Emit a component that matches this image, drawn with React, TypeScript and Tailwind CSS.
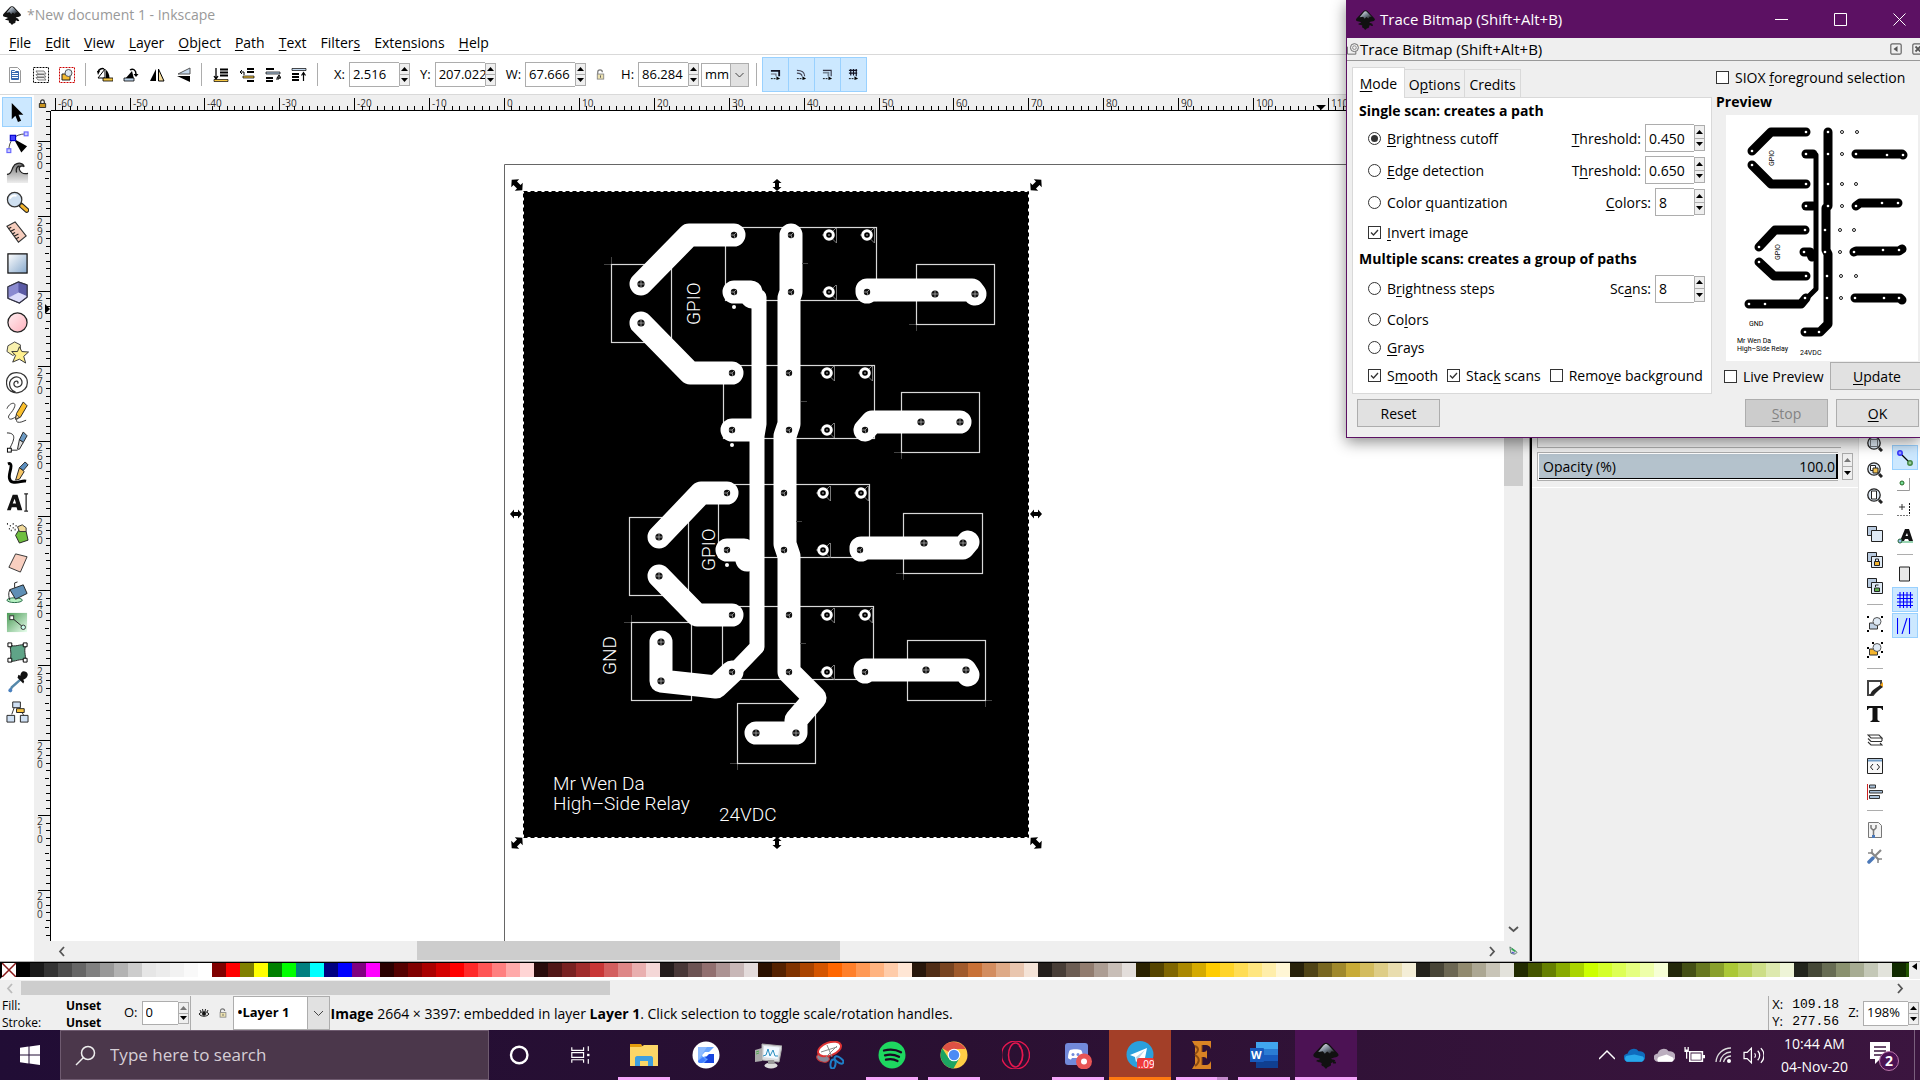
import React, { ReactNode } from "react";

/* ---------- shared helpers ---------- */

/* "_" marks the letter that carries the keyboard mnemonic */
function Mn({ t }: { t: string }) {
  const i = t.indexOf("_");
  if (i < 0) return <>{t}</>;
  return (
    <span className="whitespace-pre">
      {t.slice(0, i)}
      <span className="underline underline-offset-2">{t[i + 1]}</span>
      {t.slice(i + 2)}
    </span>
  );
}

function Svg({ s = 16, vb = 16, children }: { s?: number; vb?: number; children: ReactNode }) {
  return (
    <svg width={s} height={s} viewBox={`0 0 ${vb} ${vb}`} fill="none" className="shrink-0" aria-hidden="true">
      {children}
    </svg>
  );
}

function Arrows({ label, dim = false }: { label: string; dim?: boolean }) {
  return (
    <span className="flex w-[11px] shrink-0 flex-col self-stretch py-px">
      <button aria-label={`Increase ${label}`} className="flex flex-1 items-center justify-center border border-[#adadad] bg-[#efefef]">
        <svg width="7" height="4" viewBox="0 0 7 4"><path d="M0 4 3.500 0 7 4z" fill={dim ? "#777" : "#000"} /></svg>
      </button>
      <button aria-label={`Decrease ${label}`} className="flex flex-1 items-center justify-center border border-t-0 border-[#adadad] bg-[#efefef]">
        <svg width="7" height="4" viewBox="0 0 7 4"><path d="M0 0 3.500 4 7 0z" fill="#000" /></svg>
      </button>
    </span>
  );
}

function Spin({ id, label, value, box, text = "text-[14px]", dim }: { id: string; label: string; value: string; box: string; text?: string; dim?: boolean }) {
  return (
    <span className={"flex items-center " + text}>
      <label htmlFor={id} className="pr-1 whitespace-nowrap"><Mn t={label} /></label>
      <span className={"flex items-stretch " + box}>
        <input id={id} defaultValue={value} className="w-0 min-w-0 flex-1 border border-r-0 border-[#adadad] bg-white pl-[3px] outline-none" />
        <Arrows label={label.replace("_", "")} dim={dim} />
      </span>
    </span>
  );
}

function InkLogo({ s }: { s: number }) {
  return (
    <Svg s={s} vb={24}>
      <defs>
        <linearGradient id="ink" x1="0" y1="0" x2="1" y2="1">
          <stop offset="0" stopColor="#fff" /><stop offset="0.5" stopColor="#7b8795" /><stop offset="1" stopColor="#111" />
        </linearGradient>
      </defs>
      <path d="M12 1.500c1 0 2 .6 3 1.600l7 7.400c1.500 1.700.6 3-1.500 3.500-2 .4-4 .6-4 1.300s3.400.7 3.400 1.700-2.500 1.200-3.400 1.800.4 1.500-.6 2.400-2.400.6-3 1.800-1.600 1-2.100-.2-2-1-2.600-2 .9-1.700-.4-2.200-4-.6-4-1.500 3-.8 3-1.600-2.400-.8-4-1.400C1 13.400.6 12 2 10.500l7-7.400c1-1 2-1.600 3-1.600z" fill="#111" />
      <path d="M12 2.500c.7 0 1.500.5 2.300 1.400l5 5.300-2.500-.4-1.500 2-2.300-1.700-2 1.900-1.700-2.200-4 .6 4.500-5.500c.8-.9 1.500-1.400 2.200-1.400z" fill="url(#ink)" />
      <path d="M18 18.500h2.500" stroke="#111" strokeWidth="1.500" />
    </Svg>
  );
}

function Lock({ s = 12 }: { s?: number }) {
  return (
    <Svg s={s} vb={12}>
      <path d="M3 6V3.500a2.500 2.500 0 0 1 5 0" stroke="#777" strokeWidth="1.300" />
      <rect x="2.500" y="5.500" width="7" height="5.500" fill="#eee3b0" stroke="#888" />
      <path d="M6 7v2.500" stroke="#555" />
    </Svg>
  );
}

/* ---------- top bars ---------- */

const MENUS = ["_File", "_Edit", "_View", "_Layer", "_Object", "_Path", "_Text", "Filter_s", "Exte_nsions", "_Help"];

const BAR_ICONS: { name: string; el: ReactNode }[][] = [
  [
    { name: "Select all", el: <><path d="M2.500.5h8l3 3v12h-11z" fill="#fff" stroke="#999" /><path d="M5 5.500h6M5 7.500h6M5 9.500h6M5 11.500h6" stroke="#3667b0" /><path d="M4.500 3.500h3l1 1h3v8h-7z" stroke="#3667b0" /></> },
    { name: "Select in all layers", el: <><rect x=".5" y=".5" width="15" height="15" stroke="#000" strokeDasharray="2 1" /><path d="M3 4h8l2 3H5zM3 7.500h8l2 2.500H5zM3 10.500h8l2 2.500H5z" fill="#eee" stroke="#666" strokeWidth=".8" /></> },
    { name: "Deselect", el: <><rect x=".5" y=".5" width="15" height="15" stroke="#c00" strokeDasharray="2 1" /><path d="M3 7h8v6H3z" fill="#f4b92e" stroke="#222" /><circle cx="9.500" cy="6" r="3.500" fill="#dbe6f0" stroke="#555" /></> },
  ],
  [
    { name: "Rotate 90 left", el: <><path d="M8 2v9H1z" fill="#fff" stroke="#000" /><path d="M9 3c1.500 1 3.500 4 3.500 8H9z" fill="#000" /><path d="M6 11h10v3H6z" fill="#f4c542" stroke="#000" strokeWidth=".8" /><path d="M1 5c1-3 4-4 6-3" stroke="#000" strokeWidth="1.500" /><path d="M0 4l3 0-2 4z" fill="#000" /></> },
    { name: "Rotate 90 right", el: <><path d="M9 4l2 8H2z" fill="#000" /><path d="M1 11h10v3H1z" fill="#b9d0e6" stroke="#000" strokeWidth=".8" /><path d="M7 3c3-2 6 0 6 4" stroke="#000" strokeWidth="1.500" /><path d="M10.500 7h5L13 10z" fill="#000" /></> },
    { name: "Flip horizontal", el: <><path d="M7 2v12H1z" fill="#000" /><path d="M9.500 2v12h5.500z" fill="#f7dd9c" stroke="#000" /></> },
    { name: "Flip vertical", el: <><path d="M15 1v6H3z" fill="#c5d9ee" stroke="#555" /><path d="M15 15V9H2z" fill="#000" /></> },
  ],
  [
    { name: "Lower to bottom", el: <><path d="M3 1v10M1 9l2 3 2-3" stroke="#000" strokeWidth="1.300" /><path d="M7 2.500h8M7 5.500h8M7 8.500h8" stroke="#000" strokeWidth="2" /><path d="M1 12.500h14v2H1z" fill="#f4c542" stroke="#000" strokeWidth=".7" /></> },
    { name: "Lower", el: <><path d="M8 2h7M8 5h7M8 14h7" stroke="#000" strokeWidth="2" /><path d="M4 9h11v2H4z" fill="#f4c542" stroke="#000" strokeWidth=".7" /><path d="M1 5h4v3M1 5l2-2M1 5l2 2" stroke="#000" /></> },
    { name: "Raise", el: <><path d="M1 2h8M1 11h7M1 14h7" stroke="#000" strokeWidth="2" /><path d="M1 5h14v2H1z" fill="#b9d0e6" stroke="#000" strokeWidth=".7" /><path d="M11 12h3V9M14 8l-2 3h4z" stroke="#000" /></> },
    { name: "Raise to top", el: <><path d="M1 1.500h14v2H1z" fill="#c5d9ee" stroke="#000" strokeWidth=".7" /><path d="M1 7h7M1 10h7M1 13h7" stroke="#000" strokeWidth="2" /><path d="M12.500 14V6M10.500 8.500l2-3 2 3" stroke="#000" strokeWidth="1.200" /></> },
  ],
];

const AFFECT = ["Scale stroke width", "Scale rounded corners", "Move gradients", "Move patterns"];

function Sep() {
  return <span className="h-[23px] w-px shrink-0 bg-[#adadad]" />;
}

function TopBars() {
  return (
    <header className="shrink-0 bg-white text-black">
      <div className="flex h-[29px] items-center gap-[5px] pl-[2px] text-[14px] text-[#999]">
        <InkLogo s={20} />
        <span>*New document 1 - Inkscape</span>
      </div>
      <nav className="flex h-[26px] items-center gap-[14px] border-b border-[#d9d9d9] pt-px pl-[9px] text-[14px]">
        {MENUS.map((m) => (
          <button key={m} className="whitespace-nowrap"><Mn t={m} /></button>
        ))}
      </nav>
      <div className="flex h-10 items-center border-b border-[#d9d9d9] pl-[7px]">
        {BAR_ICONS.map((g, i) => (
          <div key={i} className="flex items-center">
            <div className="flex items-center gap-[10px] pr-[10px]">
              {g.map((x) => (
                <button key={x.name} aria-label={x.name}><Svg>{x.el}</Svg></button>
              ))}
            </div>
            <Sep />
            <span className={i === 2 ? "w-4" : "w-[11px]"} />
          </div>
        ))}
        <div className="flex items-center gap-[10px]">
          <Spin id="x" label="X:" value="2.516" box="h-[25px] w-[61px]" text="text-[13px]" />
          <Spin id="y" label="Y:" value="207.022" box="h-[25px] w-[61px]" text="text-[13px]" />
          <Spin id="w" label="W:" value="67.666" box="h-[25px] w-[61px]" text="text-[13px]" />
        </div>
        <button aria-label="Lock width and height" className="pr-[15px] pl-[9px]"><Lock s={11} /></button>
        <Spin id="h" label="H:" value="86.284" box="h-[25px] w-[61px]" text="text-[13px]" />
        <span className="relative ml-0.5 flex h-6 w-12 items-center border border-[#adadad] bg-white">
          <select aria-label="Unit" className="h-full w-full appearance-none bg-transparent pl-[3px] text-[13px] outline-none">
            <option>mm</option>
          </select>
          <span className="pointer-events-none absolute inset-y-0 right-0 flex w-[18px] items-center justify-center border-l border-[#adadad] bg-[#e1e1e1]">
            <svg width="9" height="6" viewBox="0 0 9 6"><path d="M.5 1l4 4 4-4" fill="none" stroke="#444" /></svg>
          </span>
        </span>
        <span className="w-[7px]" />
        <Sep />
        <div className="ml-[6px] flex">
          {AFFECT.map((a, i) => (
            <button key={a} aria-label={a} className="-ml-px flex h-[35px] w-[27px] items-center justify-center border border-[#99d1ff] bg-[#cce8ff]">
              <Svg s={11} vb={12}>
                {i === 0 && <><path d="M1 2h9v6" stroke="#112" strokeWidth="2" /><path d="M1 5.500h5.500V8" stroke="#667" strokeWidth="1.200" /></>}
                {i === 1 && <><path d="M1 1.500c5 0 8.500 2 8.500 6.500" stroke="#445" strokeWidth="1.200" /><path d="M1 4.500c3 0 5.500 1 5.500 3.500" stroke="#445" strokeWidth="1.200" /></>}
                {i === 2 && <><path d="M1 1.500h9V8" stroke="#334" strokeWidth="1.200" /><path d="M1 3h7v5H6V5H1z" fill="#789" /></>}
                {i === 3 && <path d="M1 1.500h9M1 4.500h9M3 0v7M6 0v7M9 0v8" stroke="#112" strokeWidth="1.300" />}
                <path d="M1 10.500h6" stroke="#000" strokeDasharray="2 1" /><path d="M7 8l4 2.500-4 1.500z" fill="#000" />
              </Svg>
            </button>
          ))}
        </div>
      </div>
    </header>
  );
}

/* ---------- left tool box ---------- */

const TOOLS: { name: string; el: ReactNode }[] = [
  { name: "Selector", el: <path d="M6 2v17l3.800-3.500 2.700 6.500 3.300-1.400-2.700-6.300h5z" fill="#000" /> },
  { name: "Edit nodes", el: <><path d="M3 20C3 11 8 3 21 3" stroke="#444" /><path d="M8 8l14 8-6 6.500z" fill="#000" /><rect x="1" y="18.500" width="4" height="4" fill="#ccf" stroke="#66f" strokeWidth="1.200" /><rect x="19" y="1" width="4" height="4" fill="#ccf" stroke="#66f" strokeWidth="1.200" /><rect x="4.500" y="4.500" width="5.500" height="5.500" fill="#44f" stroke="#00c" strokeWidth="1.200" /></> },
  { name: "Tweak", el: <><path d="M1 23V14c6 0 4-6 8-10 4-3 9-2 10 2-3-1-5 0-5 3s3 5 9 4v10z" fill="url(#gray)" /><path d="M1 14c6 0 4-6 8-10 4-3 9-2 10 2M19 6c-3-2-6 0-5 3s3 5 9 4M11 12c-1-4 0-6 3-7" stroke="#222" strokeWidth="1.300" /></> },
  { name: "Zoom", el: <><path d="M16 15l5.500 5" stroke="#222" strokeWidth="5.500" strokeLinecap="round" /><path d="M16.500 15.500l5 4.500" stroke="#f4b52e" strokeWidth="3.300" strokeLinecap="round" /><circle cx="9" cy="9" r="7.500" fill="#cfe0f1" stroke="#333" strokeWidth="1.300" /><path d="M4 8c1-3 4-4 7-3" stroke="#fff" strokeWidth="2" /></> },
  { name: "Measure", el: <><path d="M1 5.500L9.500 1 21 15.500 13 22z" fill="#f6cdbd" stroke="#333" strokeWidth="1.200" /><path d="M2.500 8l3-1.500M4.500 11L9 8.500M6.500 13.500l3-1.500M8.500 16l4.500-2.500M10.500 18.500l3-1.500" stroke="#222" strokeWidth="1.200" /></> },
  { name: "Rectangle", el: <rect x="2" y="3" width="20" height="20" fill="url(#blue)" stroke="#111" strokeWidth="1.300" /> },
  { name: "3D box", el: <><path d="M2 6l11-5 9 3v13l-8 6-12-5z" fill="#9c9cdd" stroke="#334" /><path d="M2 6l11-5 9 3v12l-9-4-11 4z" fill="#5a5aa5" /><path d="M13 1v11L2 17V6z" fill="#8a8ad0" /><path d="M13 12l9 4-8 6.500L2 18z" fill="#dcdcfa" /><path d="M2 6l11-5 9 3v13l-8 6-12-5z" stroke="#334" strokeWidth="1.200" /></> },
  { name: "Ellipse", el: <ellipse cx="12" cy="12" rx="10" ry="10" fill="url(#pink)" stroke="#222" strokeWidth="1.300" /> },
  { name: "Star", el: <><path d="M2 5l7-4 6 3 0 8-8 3-6-4z" fill="#f8f0ad" stroke="#444" /><path d="M14 6l2.500 5 7 .5-5 4.500 2 7-6.500-4-7 3 3-7-4-4 6 0z" fill="#fff08e" stroke="#333" /></> },
  { name: "Spiral", el: <path d="M12 13c1-1 .5-2.500-1-2.500-2.500 0-3.500 3-2 5s5.500 1.500 7-1 .5-7-3-8-8 1-9 5 1 9 6 10.500M19.500 19c4-4 3.500-11-.5-14.500S7 .5 3 5s-3 13 2 16 11 2 14.500-2" stroke="#333" strokeWidth="1.300" /> },
  { name: "Pencil", el: <><path d="M1 8c2-6 10-8 8-2S1 15 3 18s7-2 9-2-3 5 0 6 6-1 9-2" stroke="#333" /><path d="M18 1l4 4-7 12-5 2 1-6z" fill="#fbc02d" stroke="#222" /><path d="M10 19l1-5 3 3z" fill="#f8dfb0" stroke="#222" strokeWidth=".7" /></> },
  { name: "Pen", el: <><path d="M1 2c12 0 6 10 2 18M5 20h7" stroke="#222" /><rect x="1.500" y="18" width="4" height="4" fill="#fff" stroke="#000" /><path d="M18 1l4 4-4 7-4-3z" fill="#6b9ac4" stroke="#222" /><path d="M14 9l4 3-4 7-2 0z" fill="#ddd" stroke="#222" /></> },
  { name: "Calligraphy", el: <><path d="M2 3c5-2 3 5 2 9s-1 9 3 10c7 1 9-2 14-1" stroke="#000" strokeWidth="3" /><path d="M20 1l3 3-5 6-4-3z" fill="#5b8fc0" stroke="#222" /><path d="M14 7l5 4-5 8-4 1z" fill="#f6c667" stroke="#222" /></> },
  { name: "Text", el: <><path d="M1 20l6-16h5l5 16h-5l-1-3H6l-1 3zM7 13h3.500L9 8z" fill="#111" /><path d="M19 3h4M19 21h4M21 3v18" stroke="#222" strokeWidth="1.300" /></> },
  { name: "Spray", el: <><path d="M1 3h1M4 5h1M7 3h1M3 8h1M7 7h1M10 5h1M5 10h1M9 9h1" stroke="#222" strokeWidth="1.600" /><path d="M13 10l8 1 2 9-9 3-4-8z" fill="#6fbf3f" stroke="#222" /><path d="M12 6l5-2 4 3v4l-7 0z" fill="#f0d99a" stroke="#333" /></> },
  { name: "Eraser", el: <path d="M10 3l12 3-7 16-12-5z" fill="#f9cfc0" stroke="#333" /> },
  { name: "Bucket", el: <><ellipse cx="9" cy="20" rx="8" ry="2.500" fill="#b5f0c0" stroke="#264" /><path d="M4 9l14-5 4 9-12 6z" fill="#5f8fb5" stroke="#222" /><path d="M4 9c-2 4-1 8 0 11M9 7V2l3-1" stroke="#222" /></> },
  { name: "Gradient", el: <><rect x="1" y="2" width="21" height="20" fill="url(#green)" /><path d="M6 7l12 10" stroke="#222" /><rect x="4" y="5" width="4" height="4" fill="#fff" stroke="#333" /><circle cx="18" cy="17" r="2.300" fill="#cfe" stroke="#333" /></> },
  { name: "Mesh", el: <><path d="M4 4c5 3 10-1 17 0-3 6 0 10-1 16-6-2-10 2-16 1 2-6 1-10 0-17z" fill="#5fa487" stroke="#222" /><path d="M2 2h4v4H2zM18 2h4v4h-4zM18 18h4v4h-4zM2 18h4v4H2z" fill="#fff" stroke="#000" /></> },
  { name: "Dropper", el: <><path d="M15 9l-9 8-2 5" stroke="#58a" strokeWidth="2.500" /><path d="M12 7l6 6 1-2-1-2c5-2 6-6 3-8s-6 0-6 4l-2-1z" fill="#111" /><circle cx="4.500" cy="20" r="2" fill="#4a80c0" /></> },
  { name: "Connector", el: <><path d="M6 14l4-11M14 7l5 9" stroke="#333" /><path d="M7 1h8v6H7zM1 15h8v7H1zM15 15h8v7h-8z" fill="#cfe0f4" stroke="#222" /><path d="M11 8h8v4h-8z" fill="#f9c440" stroke="#222" /></> },
];

function ToolBox() {
  return (
    <aside className="flex w-[34px] shrink-0 flex-col items-center bg-white pt-[2px]">
      <svg width="0" height="0" className="absolute" aria-hidden="true">
        <defs>
          <linearGradient id="blue" x1="0" y1="0" x2="1" y2="1"><stop offset="0" stopColor="#fff" /><stop offset="1" stopColor="#86a8cc" /></linearGradient>
          <linearGradient id="green" x1="0" y1="0" x2="1" y2="1"><stop offset="0" stopColor="#4a9a55" /><stop offset="1" stopColor="#e9ffee" /></linearGradient>
          <linearGradient id="pink" x1="0" y1="0" x2="1" y2="1"><stop offset="0" stopColor="#fff0f2" /><stop offset="1" stopColor="#ffb0bc" /></linearGradient>
          <linearGradient id="gray" x1="0" y1="0" x2="0" y2="1"><stop offset="0" stopColor="#777" /><stop offset="1" stopColor="#eee" /></linearGradient>
        </defs>
      </svg>
      {TOOLS.map((t, i) => (
        <button key={t.name} aria-label={t.name} className={"flex h-[30px] w-[30px] shrink-0 items-center justify-center " + (i === 0 ? "border border-[#99d1ff] bg-[#cce8ff]" : "")}>
          <Svg s={23} vb={24}>{t.el}</Svg>
        </button>
      ))}
    </aside>
  );
}

/* ---------- rulers ---------- */

const STEP = 74.9;

function HRuler() {
  const majors = Array.from({ length: 20 }, (_, i) => i - 6);
  return (
    <svg className="block h-4 w-full" viewBox="51 95 1453 16" preserveAspectRatio="xMinYMin slice" fontFamily="Open Sans, sans-serif" fontSize="10">
      {majors.map((m) => {
        const x = Math.round(504 + m * STEP);
        return (
          <g key={m}>
            <path d={`M${x + 0.5} 98v12`} stroke="#000" />
            {m < 12 && <text x={x + 3} y="107" fill="#333">{m * 10}</text>}
            {Array.from({ length: 9 }, (_, k) => (
              <path key={k} d={`M${Math.round(504 + (m + (k + 1) / 10) * STEP) + 0.5} 106v4`} stroke="#000" />
            ))}
          </g>
        );
      })}
      <path d="M51 110.500h1453" stroke="#000" />
      <path d="M1316 105h10l-5 5z" fill="#000" />
    </svg>
  );
}

function VRuler() {
  const majors = Array.from({ length: 12 }, (_, i) => i - 1);
  return (
    <svg className="block h-full w-[17px] shrink-0 bg-[#efefef]" viewBox="34 111 17 830" preserveAspectRatio="xMinYMin slice" fontFamily="Open Sans, sans-serif" fontSize="10">
      {majors.map((m) => {
        const y = Math.round(141 + m * STEP);
        return (
          <g key={m}>
            <path d={`M38 ${y + 0.5}h12`} stroke="#000" />
            {m >= 0 && String(300 - m * 10).split("").map((d, k) => (
              <text key={k} x="37" y={y + 10 + k * 9} fill="#333">{d}</text>
            ))}
            {Array.from({ length: 9 }, (_, k) => {
              const ty = Math.round(141 + (m + (k + 1) / 10) * STEP) + 0.5;
              return <path key={k} d={`M${k === 4 ? 45 : 46} ${ty}h4`} stroke="#000" />;
            })}
          </g>
        );
      })}
      <path d="M50.500 111v830" stroke="#000" />
      <path d="M45 304v10l5-5z" fill="#000" />
    </svg>
  );
}

/* ---------- board drawing ---------- */

const TRACES = [
  "M734 235H689L641 284",
  "M641 323L690 373H732",
  "M791 235V292L789 298V424L785 436V544L789 556V672L815 698L796 720V733H756",
  "M734 292H751L752 297",
  "M732 430H753",
  "M727 550H744L747 560",
  "M727 493H701L659 537",
  "M659 576L697 615H732",
  "M661 642V681L716 687L732 672",
  "M867 292V290H972L975 294",
  "M865 430L872 422H960",
  "M861 550V548H963L968 542",
  "M865 672V670H965L968 675",
];
const OUTLINES = [
  [725, 227, 151, 73], [723, 365, 151, 73], [718, 484, 151, 73], [722, 606, 151, 73],
  [611, 264, 60, 78], [629, 517, 59, 78], [631, 622, 60, 78], [737, 703, 78, 60],
  [916, 264, 78, 60], [901, 392, 78, 60], [903, 513, 79, 60], [907, 640, 78, 60],
];
const PADS = [[734, 235], [732, 373], [727, 493], [732, 615]].flatMap(([x, y]) => [[x, y], [x + 57, y], [x, y + 57], [x + 57, y + 57], [x + 133, y + 57]]);
const RINGS = [[829, 235], [827, 373], [823, 493], [827, 615]].flatMap(([x, y]) => [[x, y], [x + 38, y], [x, y + 57]]);
const HOLES = [[641, 284], [641, 323], [659, 537], [659, 576], [661, 642], [661, 681], [756, 733], [796, 733], [935, 294], [975, 294], [921, 422], [960, 422], [924, 543], [963, 543], [926, 670], [966, 670]];
const HANDLES = [[517, 185, 45], [777, 185, 90], [1036, 185, 135], [516, 514, 0], [1036, 514, 0], [517, 843, 135], [777, 843, 90], [1036, 843, 45]];
const CROSSES = [[611, 264], [916, 324], [901, 452], [903, 573], [985, 700], [631, 622], [737, 763]];

function Board() {
  return (
    <svg className="block h-full w-full" viewBox="51 111 1453 830" preserveAspectRatio="xMinYMin slice" fill="none">
      <path d="M504.500 941V164.500H1504" stroke="#666" />
      <rect x="524" y="192" width="505" height="645" fill="#000" />
      <rect x="523.500" y="191.500" width="505" height="646" stroke="#fff" />
      <rect x="523.500" y="191.500" width="505" height="646" stroke="#000" strokeDasharray="4 3" />
      {CROSSES.map(([x, y]) => <path key={`${x}-${y}`} d={`M${x - 7} ${y + 0.5}h14M${x + 0.5} ${y - 7}v14`} stroke="#444" />)}
      {OUTLINES.map(([x, y, w, h]) => <rect key={`${x}-${y}`} x={x + 0.5} y={y + 0.5} width={w} height={h} stroke="#d8d8d8" strokeWidth="1.200" />)}
      <g stroke="#fff" strokeLinecap="round" strokeLinejoin="round">
        <path d="M759 297V424L757 436V647L732 673" strokeWidth="15" />
        {TRACES.map((d) => <path key={d} d={d} strokeWidth="23" />)}
      </g>
      {PADS.map(([x, y]) => (
        <g key={`${x}-${y}`}><circle cx={x} cy={y} r="3.200" fill="#111" /><path d={`M${x} ${y}l2-2M${x} ${y}l1 3M${x} ${y}h-3`} stroke="#bbb" strokeWidth=".7" /></g>
      ))}
      {HOLES.map(([x, y]) => (
        <g key={`${x}-${y}`}><circle cx={x} cy={y} r="3.600" fill="#111" /><path d={`M${x - 3} ${y}h6M${x} ${y - 3}v6`} stroke="#aaa" strokeWidth=".8" /></g>
      ))}
      {RINGS.map(([x, y]) => (
        <g key={`${x}-${y}`}>
          <path d={`M${x - 7} ${y}h4M${x + 7.5} ${y - 7}v15l-5-5M${x + 7} ${y - 7}l-4 4`} stroke="#999" strokeWidth=".8" />
          <circle cx={x} cy={y} r="4.300" stroke="#fff" strokeWidth="3" />
          <circle cx={x} cy={y} r="1" fill="#777" />
        </g>
      ))}
      {[[734, 307], [732, 445], [727, 565]].map(([x, y]) => <circle key={y} cx={x} cy={y} r="2" fill="#fff" />)}
      {[[805, 263], [804, 401], [799, 521], [803, 643]].map(([x, y]) => <path key={y} d={`M${x - 3} ${y}.5h6`} stroke="#444" />)}
      <g fill="#fff" fontFamily="Roboto, sans-serif" fontWeight="300" fontSize="19">
        <text transform="translate(700 325) rotate(-90)">GPIO</text>
        <text transform="translate(715 571) rotate(-90)">GPIO</text>
        <text transform="translate(616 675) rotate(-90)">GND</text>
        <text x="553" y="790">Mr Wen Da</text>
        <text x="553" y="810">High–Side Relay</text>
        <text x="719" y="821">24VDC</text>
      </g>
      {HANDLES.map(([x, y, r]) => (
        <path key={`${x}-${y}`} transform={`translate(${x} ${y}) rotate(${r})${r % 90 ? " scale(1.25)" : ""}`} d="M-6 0L-2-4.500V-2H2V-4.500L6 0L2 4.500V2H-2V4.500Z" fill="#000" />
      ))}
    </svg>
  );
}

function Chev({ dir, c = "#555" }: { dir: "l" | "r" | "d" | "u"; c?: string }) {
  const d = { l: "M7 1L3 5.500 7 10", r: "M3 1l4 4.500L3 10", d: "M1 3l4.500 4L10 3", u: "M1 8l4.500-4L10 8" }[dir];
  return <svg width="11" height="11" viewBox="0 0 11 11" aria-hidden="true"><path d={d} fill="none" stroke={c} strokeWidth="1.800" /></svg>;
}

function CanvasArea() {
  return (
    <section className="flex min-w-0 flex-1 bg-[#efefef]">
      <div className="flex min-w-0 flex-1 flex-col">
        <div className="flex h-4 shrink-0">
          <div className="flex w-[17px] shrink-0 items-center justify-center">
            <Svg s={9} vb={10}><path d="M3 5V3a2 2 0 0 1 4 0v2" stroke="#222" strokeWidth="1.300" /><path d="M1.500 5h7v4.500h-7z" fill="#c8921c" stroke="#222" /></Svg>
          </div>
          <div className="min-w-0 flex-1"><HRuler /></div>
        </div>
        <div className="flex min-h-0 flex-1">
          <VRuler />
          <div className="min-w-0 flex-1 overflow-hidden bg-white"><Board /></div>
        </div>
        <div className="flex h-5 shrink-0 items-center pl-[22px]">
          <button aria-label="Scroll left" className="flex w-3 justify-center"><Chev dir="l" /></button>
          <div className="mx-1 flex h-full flex-1">
            <span className="w-[24.500%] shrink-0" />
            <span className="mb-px w-[30%] bg-[#cdcdcd]" />
          </div>
          <button aria-label="Scroll right" className="mr-[6px] flex w-3 justify-center"><Chev dir="r" /></button>
        </div>
      </div>
      <div className="flex w-[19px] shrink-0 flex-col items-center pt-4">
        <div className="min-h-0 w-full flex-1"><div className="h-[46.300%] bg-[#cdcdcd]" /></div>
        <button aria-label="Scroll down" className="flex h-5 items-center pb-[3px]"><Chev dir="d" /></button>
        <span className="flex h-5 items-center pb-px"><Svg s={9} vb={10}><path d="M1 1l8 6-2 2-2 0-3-1z" fill="#ddd" stroke="#576" /><path d="M3 3l4 3" stroke="#3a5" strokeWidth="2" /><path d="M3 7l3 1" stroke="#55c" strokeWidth="1.500" /></Svg></span>
      </div>
      <span className="w-[7px] border-r border-[#999]" />
    </section>
  );
}

/* ---------- right dock ---------- */

const ZI = (inner: ReactNode) => (<><circle cx="7" cy="7" r="6.200" fill="#dfeaf5" stroke="#222" strokeWidth="1.300" /><path d="M12 12l3 3" stroke="#222" strokeWidth="3" />{inner}</>);
const LAY = (inner: ReactNode) => (<><path d="M.5.5h9v9h-9z" fill="#b9cbe0" stroke="#222" /><path d="M4.500 4.500h11v11h-11z" fill="#dfeaf5" stroke="#222" />{inner}</>);

const COMMANDS: ({ name: string; el: ReactNode } | null)[] = [
  { name: "Zoom selection", el: ZI(<rect x="3.500" y="3.500" width="7" height="7" stroke="#000" strokeDasharray="1 1" />) },
  { name: "Zoom drawing", el: ZI(<><path d="M3.500 3.500h5v5h-5z" fill="#fff" stroke="#222" /><path d="M6 6h5v5H6z" fill="#f5c451" stroke="#222" /></>) },
  { name: "Zoom page", el: ZI(<path d="M4.500 3h5v8h-5z" fill="#fff" stroke="#222" />) },
  null,
  { name: "Duplicate", el: LAY(null) },
  { name: "Clone", el: LAY(<><path d="M7.500 9.500h5v4h-5z" fill="#f5b52e" stroke="#222" /><path d="M8.500 9V7h3v2" stroke="#222" /></>) },
  { name: "Unlink clone", el: LAY(<><path d="M7.500 10h5v3.500h-5z" fill="#5db14a" stroke="#222" /><path d="M8.500 9V7h3" stroke="#222" /></>) },
  null,
  { name: "Group", el: <><path d="M0 1h2M14 1h2M0 15h2M14 15h2" stroke="#000" strokeWidth="2" /><path d="M2.500 7h8v6h-8z" fill="#c2d3e6" stroke="#333" /><circle cx="10" cy="5.500" r="4" fill="#dfeaf5" stroke="#555" /></> },
  { name: "Ungroup", el: <><path d="M0 6h2M14 1h2M5 1h2M0 15h2M11 15h2M14 10h2" stroke="#000" strokeWidth="2" /><path d="M2.500 7h8v6h-8z" fill="#f5b52e" stroke="#333" /><circle cx="10" cy="5.500" r="4" fill="#dfeaf5" stroke="#555" /></> },
  null,
  { name: "Fill and Stroke", el: <><path d="M1 1h13v4L6 15H1z" fill="#fff" stroke="#444" strokeWidth="2" /><path d="M3 16C4 9 10 8 15 4l1 3C11 10 9 14 3 16z" fill="#222" /><path d="M13 5l3-3v5z" fill="#f5a81c" /></> },
  { name: "Text and Font", el: <path d="M0 0h16v4h-1c0-1.500-1-2-3-2h-1.500v11c0 1.300.5 2 2 2v1h-9v-1c1.500 0 2-.7 2-2V2H4C2 2 1 2.500 1 4H0z" fill="#111" /> },
  { name: "Layers", el: <path d="M1 3h11l3 3H4zM1 6.500l3 3h11M1 10l3 3h11l-2-2M15 6v3" fill="none" stroke="#333" strokeWidth="1.100" /> },
  { name: "XML editor", el: <><path d="M.5.5h15v15H.5z" fill="#f7f7f7" stroke="#222" /><path d="M1 2.500h14" stroke="#6f9bc5" strokeWidth="2" /><path d="M6 6L3.500 9 6 12M10 6l2.500 3L10 12" stroke="#222" /></> },
  { name: "Align", el: <><path d="M.5 0v16" stroke="#c22" /><path d="M2.500 1h6v3h-6zM2.500 6.500h13v2.500h-13zM2.500 11.500h10v3h-10z" fill="#a9c0d8" stroke="#333" /></> },
  null,
  { name: "Document properties", el: <><path d="M1.500.5h10l3 3v12h-13z" fill="#f3f3f3" stroke="#777" /><path d="M4 3v3l2.500 2.500L9 6V3M6.500 8.500V13" stroke="#777" strokeWidth="1.500" /><path d="M5 13h3v3H5z" fill="#4b78b8" /></> },
  { name: "Preferences", el: <><path d="M4 4l8 8M14 2L8 8" stroke="#888" strokeWidth="2.200" /><path d="M5 1v4H1M15 11h-4v4" stroke="#888" strokeWidth="1.500" /><path d="M6 10l-4 4" stroke="#4b78b8" strokeWidth="3.500" strokeLinecap="round" /></> },
];

const SNAPS: ({ name: string; on?: boolean; el: ReactNode } | null)[] = [
  { name: "Snap nodes", on: true, el: <><path d="M3 3l9 9" stroke="#000" strokeWidth="1.300" /><circle cx="3" cy="3" r="2.200" fill="#99f" stroke="#33f" strokeWidth="1.500" /><circle cx="13" cy="13" r="2.200" fill="#9c9" stroke="#484" strokeWidth="1.500" /></> },
  { name: "Snap centers", el: <><circle cx="5" cy="7" r="2" fill="#7d9" stroke="#262" /><path d="M12.500 2v12.500H0" stroke="#999" /></> },
  { name: "Snap rotation", el: <><path d="M2 5h6M5 2v6" stroke="#333" /><path d="M12.500 1v12" stroke="#111" strokeDasharray="2 1" /><path d="M0 13.500h13" stroke="#777" strokeDasharray="2 1" /></> },
  { name: "Snap text", el: <><path d="M3 13L8 1h4l4 12h-4l-1-2H8l-1 2zM8.500 8h2.500L10 5z" fill="#111" /><circle cx="3" cy="13" r="2" fill="#9be" stroke="#263" /><path d="M5 14h11" stroke="#3a6" /></> },
  null,
  { name: "Snap page", el: <path d="M2.500 1h10v14h-10z" fill="#e9e9e9" stroke="#222" /> },
  { name: "Snap grids", on: true, el: <path d="M3 0v16M6.500 0v16M10 0v16M13.500 0v16M0 3h16M0 6.500h16M0 10h16M0 13.500h16" stroke="#00f" strokeWidth="1.100" /> },
  { name: "Snap guides", on: true, el: <path d="M.5 0v16M12.500 0v16M5 16L10 0" stroke="#00f" strokeWidth="1.100" /> },
];

function RightDock() {
  return (
    <>
      <section className="flex w-[328px] shrink-0 flex-col border-l-2 border-black bg-[#efefef] pt-[340px]">
        <div className="border-b border-white pr-[5px] pb-[6px] pl-[5px]">
          <div className="h-[13px] w-[304px] border-b border-l border-[#adadad]" />
          <label htmlFor="opacity" className="sr-only">Opacity</label>
          <div className="mt-[4px] flex h-[29px] items-stretch">
            <div className="flex flex-1 border border-r-0 border-[#adadad] bg-white p-px pr-0">
              <div className="flex flex-1 items-center justify-between border-r-2 border-b border-black bg-[#b4c2cc] pr-px pl-1 text-[14px]">
                <span>Opacity (%)</span>
                <input id="opacity" defaultValue="100.0" className="w-12 bg-transparent text-right outline-none" />
              </div>
            </div>
            <span className="w-1" />
            <Arrows label="Opacity" dim />
          </div>
        </div>
      </section>
      <aside className="flex w-[32px] shrink-0 flex-col items-center border-l border-[#e4e4e4] bg-white pt-[336px]">
        {COMMANDS.map((c, i) =>
          c ? (
            <button key={c.name} aria-label={c.name} className="flex h-[26px] w-[26px] shrink-0 items-center justify-center"><Svg>{c.el}</Svg></button>
          ) : (
            <span key={i} className="mt-[5px] mb-1.5 h-px w-4 shrink-0 bg-[#adadad]" />
          ),
        )}
      </aside>
      <aside className="flex w-[30px] shrink-0 flex-col items-center bg-white pt-[350px]">
        {SNAPS.map((c, i) =>
          c ? (
            <button key={c.name} aria-label={c.name} className={"mb-px flex h-[25px] w-[26px] shrink-0 items-center justify-center " + (c.on ? "border border-[#99d1ff] bg-[#cce8ff]" : "")}><Svg>{c.el}</Svg></button>
          ) : (
            <span key={i} className="mt-[5px] mb-1.5 h-px w-4 shrink-0 bg-[#adadad]" />
          ),
        )}
      </aside>
    </>
  );
}

/* ---------- palette and status bar ---------- */

const PALETTE = (
  "000000 1a1a1a 333333 4d4d4d 666666 808080 999999 b3b3b3 cccccc e6e6e6 ececec f2f2f2 f9f9f9 ffffff " +
  "800000 ff0000 808000 ffff00 008000 00ff00 008080 00ffff 000080 0000ff 800080 ff00ff " +
  "2b0000 550000 800000 aa0000 d40000 ff0000 ff2a2a ff5555 ff8080 ffaaaa ffd5d5 " +
  "280b0b 501616 782121 a02c2c c83737 d35f5f de8787 e9afaf f4d7d7 241c1c 483737 6c5353 916f6f ac9393 c8b7b7 e3dbdb " +
  "2b1100 552200 803300 aa4400 d45500 ff6600 ff7f2a ff9955 ffb380 ffccaa ffe6d5 " +
  "28170b 502d16 784421 a05a2c c87137 d38d5f deaa87 e9c6af f4e3d7 241f1c 483e37 6c5d53 917c6f ac9d93 c8beb7 e3dedb " +
  "2b2200 554400 806600 aa8800 d4aa00 ffcc00 ffd42a ffdd55 ffe680 ffeeaa fff6d5 " +
  "28220b 504416 786721 a0892c c8ab37 d3bc5f decd87 e9ddaf f4eed7 24221c 484537 6c6753 918a6f aca793 c8c4b7 e3e2db " +
  "222b00 445500 668000 88aa00 aad400 ccff00 d4ff2a ddff55 e5ff80 eeffaa f6ffd5 " +
  "23280b 445016 677821 89a02c abc837 bcd35f cdde87 dde9af eef4d7 22241c 454837 676c53 8a916f a7ac93 c4c8b7 e2e3db 112b00"
).split(" ");

function Palette() {
  return (
    <div className="shrink-0 border-t border-[#adadad] bg-[#efefef]">
      <div className="flex">
        <div className="flex h-[17px] flex-1 border-t border-b-2 border-l-2 border-black border-b-white">
          <button aria-label="No colour" className="flex-1 bg-white">
            <svg className="h-full w-full" viewBox="0 0 14 14" preserveAspectRatio="none"><path d="M0 0l14 14M14 0L0 14" stroke="#8b1a1a" strokeWidth="1.500" /></svg>
          </button>
          {PALETTE.map((c, i) => (
            <button key={i} aria-label={`#${c}`} className="flex-1" style={{ backgroundColor: `#${c}` }} />
          ))}
          <span className="w-[3px] bg-[#225500]" />
        </div>
        <button aria-label="Palette menu" className="flex w-[11px] pt-px pl-[3px]">
          <svg width="5" height="7" viewBox="0 0 5 7"><path d="M5 0v7L0 3.500z" /></svg>
        </button>
      </div>
      <div className="flex h-[17px] items-center border-t border-white">
        <button aria-label="Scroll palette left" className="flex w-[21px] justify-center"><Chev dir="l" c="#bbb" /></button>
        <div className="flex h-full flex-1 items-center"><span className="h-[14px] w-[31.700%] bg-[#cdcdcd]" /></div>
        <button aria-label="Scroll palette right" className="flex w-[40px] justify-center"><Chev dir="r" /></button>
      </div>
    </div>
  );
}

function StatusBar() {
  return (
    <footer className="flex h-[34px] shrink-0 items-center bg-[#efefef] text-black">
      <dl className="grid w-[124px] grid-cols-[64px_1fr] pt-px pl-0.5 text-[12px] leading-[17px]">
        <dt>Fill:</dt><dd className="font-bold">Unset</dd>
        <dt>Stroke:</dt><dd className="font-bold">Unset</dd>
      </dl>
      <Spin id="op" label="O:" value="0" box="h-[24px] w-[47px]" text="text-[13px]" dim />
      <span className="mr-[3px] ml-px h-full w-px bg-[#adadad]" />
      <button aria-label="Toggle layer visibility" className="ml-1">
        <Svg s={12} vb={12}><path d="M1 7c2-3 8-3 10 0-2 3-8 3-10 0z" fill="#ddd" stroke="#222" /><circle cx="6" cy="6.800" r="2" fill="#111" /><path d="M2 3l1 2M4.500 2l.5 2.500M7.500 2L7 4.500M10 3L9 5" stroke="#222" /></Svg>
      </button>
      <button aria-label="Lock layer" className="mr-[5px] ml-2"><Lock s={10} /></button>
      <span className="relative flex h-full w-[97px] items-center border border-[#adadad] bg-white">
        <select aria-label="Current layer" className="h-full w-full appearance-none bg-transparent pl-1 text-[13px] font-bold outline-none">
          <option>•Layer 1</option>
        </select>
        <span className="pointer-events-none absolute inset-y-0 right-0 flex w-[22px] items-center justify-center border-l border-[#adadad] bg-[#e1e1e1]">
          <svg width="11" height="7" viewBox="0 0 11 7"><path d="M1 1l4.500 4.500L10 1" fill="none" stroke="#444" /></svg>
        </span>
      </span>
      <p className="ml-px flex-1 text-[14px] whitespace-nowrap">
        <b>Image</b> 2664 × 3397: embedded in layer <b>Layer 1</b>. Click selection to toggle scale/rotation handles.
      </p>
      <dl className="grid h-full w-[80px] grid-cols-[20px_1fr] border-l border-[#adadad] pl-[3px] text-[13px] leading-[17px]">
        <dt>X:</dt><dd className="font-['Liberation_Mono',monospace]">109.18</dd>
        <dt>Y:</dt><dd className="font-['Liberation_Mono',monospace]">277.56</dd>
      </dl>
      <Spin id="zoom" label="Z:" value="198%" box="mr-px h-[25px] w-[56px]" text="text-[13px]" />
    </footer>
  );
}

/* ---------- trace bitmap dialog ---------- */

function Radio({ label, on }: { label: string; on?: boolean }) {
  return (
    <label className="flex flex-1 items-center gap-[6px]">
      <input type="radio" name="scan" defaultChecked={on} className="h-[13px] w-[13px] appearance-none rounded-full border border-[#333] bg-white bg-clip-content p-[2px] checked:bg-[#333]" />
      <Mn t={label} />
    </label>
  );
}

function Check({ label, on }: { label: string; on?: boolean }) {
  return (
    <label className="flex items-center gap-[6px] whitespace-nowrap">
      <span className="grid">
        <input type="checkbox" defaultChecked={on} className="peer col-start-1 row-start-1 h-[13px] w-[13px] appearance-none border border-[#333] bg-white" />
        <svg className="pointer-events-none invisible col-start-1 row-start-1 peer-checked:visible" width="13" height="13" viewBox="0 0 13 13"><path d="M3 6.500l2.500 2.500L10 4" fill="none" stroke="#333" strokeWidth="1.300" /></svg>
      </span>
      <Mn t={label} />
    </label>
  );
}

const P_TRACES = [
  "M1806 132H1771L1752 151", "M1752 165L1771 184H1806", "M1828 132V206L1826 208V250L1828 254V324L1820 332H1805",
  "M1806 154H1813", "M1806 206H1813", "M1804 252H1810L1812 257", "M1805 230H1775L1759 247", "M1759 262L1774 276H1806",
  "M1749 304H1801L1806 298", "M1856 154H1902L1903 155", "M1856 206L1860 203H1898", "M1854 252L1856 251H1899L1902 249", "M1855 298H1900L1902 300",
];
const P_HOLES = [[1806, 132], [1828, 132], [1752, 151], [1752, 165], [1806, 154], [1828, 154], [1856, 154], [1887, 155], [1903, 155], [1806, 184], [1828, 184], [1806, 206], [1828, 206], [1856, 206], [1882, 203], [1898, 203], [1805, 230], [1825, 230], [1759, 247], [1759, 262], [1804, 252], [1825, 252], [1854, 252], [1883, 250], [1899, 250], [1806, 276], [1827, 276], [1805, 298], [1827, 298], [1855, 298], [1884, 298], [1899, 298], [1749, 304], [1765, 304], [1805, 332], [1819, 332]];
const P_RINGS = [[1842, 132], [1857, 132], [1842, 154], [1842, 184], [1856, 184], [1842, 206], [1840, 230], [1854, 230], [1840, 252], [1841, 276], [1856, 276], [1841, 298]];

function Preview() {
  return (
    <svg width="192" height="246" viewBox="1726 115 192 246" className="ml-[10px] bg-white" fill="none">
      <g stroke="#000" strokeLinecap="round" strokeLinejoin="round" strokeWidth="9">
        <path d="M1816 155V289L1806 299" strokeWidth="5" />
        {P_TRACES.map((d) => <path key={d} d={d} />)}
      </g>
      {P_HOLES.map(([x, y]) => <circle key={`${x}-${y}`} cx={x} cy={y} r="1.300" fill="#fff" />)}
      {P_RINGS.map(([x, y]) => <circle key={`${x}-${y}`} cx={x} cy={y} r="1.500" stroke="#000" strokeWidth=".9" />)}
      <g fill="#000" fontFamily="Roboto, sans-serif" fontSize="7">
        <text transform="translate(1774 166) rotate(-90)">GPIO</text>
        <text transform="translate(1780 260) rotate(-90)">GPIO</text>
        <text x="1749" y="326">GND</text>
        <text x="1737" y="343">Mr Wen Da</text>
        <text x="1737" y="351">High–Side Relay</text>
        <text x="1800" y="355">24VDC</text>
      </g>
    </svg>
  );
}

function Dialog() {
  const btn = "h-7 w-[83px] border border-[#adadad] ";
  return (
    <div role="dialog" aria-label="Trace Bitmap" className="absolute top-0 right-0 flex w-[574px] flex-col overflow-hidden border-b border-l border-[#5c1163] bg-[#efefef] text-[14px] text-black shadow-[0_4px_14px_rgba(0,0,0,0.45)]">
      <div className="flex h-[38px] items-center bg-[#5c1163] pl-2 text-[15px] text-white">
        <InkLogo s={21} />
        <span className="flex-1 pl-1">Trace Bitmap (Shift+Alt+B)</span>
        <div className="flex gap-[46px] pr-[14px]">
          <button aria-label="Minimize"><Svg s={13} vb={13}><path d="M0 6.500h13" stroke="#fff" /></Svg></button>
          <button aria-label="Maximize"><Svg s={13} vb={13}><path d="M.5.5h12v12H.5z" stroke="#fff" /></Svg></button>
          <button aria-label="Close"><Svg s={13} vb={13}><path d="M.5.5l12 12M12.500.5l-12 12" stroke="#fff" /></Svg></button>
        </div>
      </div>
      <div className="flex h-[23px] items-center border-b border-[#999] text-[15px]">
        <Svg s={13} vb={14}><path d="M.5 4v8h9V9" stroke="#666" /><circle cx="8" cy="5" r="4.300" fill="#eee" stroke="#666" /><circle cx="8" cy="5" r="2" stroke="#888" /></Svg>
        <span className="flex-1">Trace Bitmap (Shift+Alt+B)</span>
        <button aria-label="Iconify dialog" className="mr-[10px]"><Svg s={12} vb={12}><rect x=".8" y=".8" width="10.400" height="10.400" rx="1.500" stroke="#666" strokeWidth="1.200" /><path d="M7.500 3v6l-4-3z" fill="#555" /></Svg></button>
        <button aria-label="Close dialog" className="-mr-1"><Svg s={12} vb={12}><rect x=".8" y=".8" width="10.400" height="10.400" rx="1.500" stroke="#666" strokeWidth="1.200" /><path d="M3.500 3.500l5 5M8.500 3.500l-5 5" stroke="#555" strokeWidth="1.800" /></Svg></button>
      </div>
      <div className="flex pt-[6px] pl-[5px]">
        <div className="w-[360px] shrink-0">
          <div role="tablist" className="flex items-end">
            <button role="tab" aria-selected="true" className="-mb-px h-[31px] w-[53px] border border-b-0 border-[#d9d9d9] bg-white"><Mn t="_Mode" /></button>
            <button role="tab" className="h-7 w-[60px] border border-b-0 border-l-0 border-[#d9d9d9] pt-px"><Mn t="O_ptions" /></button>
            <button role="tab" className="h-7 w-[56px] border border-b-0 border-l-0 border-[#d9d9d9] pt-px">Credits</button>
          </div>
          <div className="h-[297px] border border-[#d9d9d9] bg-white pr-[6px] pl-1.5">
            <h2 className="flex h-6 items-center font-bold">Single scan: creates a path</h2>
            <div className="pl-[9px]">
              <div className="flex h-8 items-center"><Radio label="_Brightness cutoff" on /><Spin id="t1" label="_Threshold:" value="0.450" box="h-7 w-[60px]" /></div>
              <div className="flex h-8 items-center"><Radio label="_Edge detection" /><Spin id="t2" label="T_hreshold:" value="0.650" box="h-7 w-[60px]" /></div>
              <div className="flex h-8 items-center"><Radio label="Color _quantization" /><Spin id="t3" label="_Colors:" value="8" box="h-7 w-[50px]" /></div>
              <div className="flex h-7 items-center"><Check label="_Invert image" on /></div>
            </div>
            <h2 className="flex h-[25px] items-center font-bold">Multiple scans: creates a group of paths</h2>
            <div className="pl-[9px]">
              <div className="flex h-[35px] items-center"><Radio label="B_rightness steps" /><Spin id="t4" label="Sc_ans:" value="8" box="h-7 w-[50px]" /></div>
              <div className="flex h-[26px] items-center"><Radio label="Co_lors" /></div>
              <div className="flex h-[30px] items-center"><Radio label="_Grays" /></div>
              <div className="flex h-[26px] items-center gap-[9px]"><Check label="S_mooth" on /><Check label="Stac_k scans" on /><Check label="Remo_ve background" /></div>
            </div>
          </div>
        </div>
        <div className="flex w-[212px] shrink-0 flex-col pl-1">
          <div className="flex h-5 items-center"><Check label="SIOX _foreground selection" /></div>
          <h2 className="flex h-7 items-center font-bold">Preview</h2>
          <Preview />
          <div className="flex items-center pt-px pl-2">
            <Check label="Live Preview" />
            <button className="ml-auto h-7 w-[94px] shrink-0 border border-[#adadad] bg-[#e1e1e1]"><Mn t="_Update" /></button>
          </div>
        </div>
      </div>
      <div className="mt-[5px] flex h-[38px] gap-2 pr-px pl-[10px]">
        <button className={btn + "bg-[#e1e1e1]"}>Reset</button>
        <button disabled className={btn + "ml-auto bg-[#cccccc] text-[#838383]"}><Mn t="_Stop" /></button>
        <button className={btn + "bg-[#e1e1e1]"}><Mn t="_OK" /></button>
      </div>
    </div>
  );
}

/* ---------- taskbar ---------- */

type App = { name: string; el: ReactNode; s?: number; cell?: string; line?: string };

const APPS: App[] = [
  { name: "Cortana", s: 22, el: <circle cx="13" cy="14" r="10.500" stroke="#fff" strokeWidth="3" /> },
  { name: "Task View", s: 22, el: <><path d="M1 4v4h15V4M1 24v-4h15v4M1 11h15v6H1zM22 3v6M22 19v6" stroke="#fff" strokeWidth="1.500" /><path d="M20.500 12.500h3v3h-3z" fill="#fff" /></> },
  { name: "File Explorer", line: "mx-[5px] bg-[#f5a5fb]", el: <><path d="M0 3h11l2 3-2 3H0z" fill="#e39c0c" /><path d="M0 6h11l3-2h14v21H0z" fill="#fcd667" /><path d="M5 25v-8c0-1 1-2 2-2h14c1 0 2 1 2 2v8h-5v-5h-8v5z" fill="#3f9fdf" /></> },
  { name: "Browser", el: <><circle cx="14" cy="14" r="13.500" fill="#fff" /><path d="M6 6h16l-5 5h-4l-3 3 1 2 3-1 3 3-3 4H8c-1 0-2-1-2-2z" fill="#6aa5ff" /><path d="M6 6h9L6 20z" fill="#8dbbff" /><path d="M13 17l4-4h5v9H12l4-4z" fill="#1746e0" /><path d="M6 20l5-4 3 3-4 3H8c-1 0-2-1-2-2z" fill="#3f7dff" /></> },
  { name: "Monitor", el: <><path d="M1 9l7-2v13l-7 1z" fill="#aaa" /><path d="M2 11l3-1M2 13l3-1" stroke="#5a5" /><path d="M8 3l20 2-3 16-17-2z" fill="#d9dcdf" stroke="#aaa" /><path d="M10 5l15.500 1.500L23.500 18 9.500 16z" fill="#f2f9ff" /><path d="M9 15l3-1 2-6 2 7 3-6 2 6 3 0" stroke="#2a8fc0" /><ellipse cx="17" cy="24.500" rx="6.500" ry="3" fill="#dcdcdc" /><path d="M14 19h6l1 4h-7z" fill="#999" /></> },
  { name: "Snipping Tool", el: <><ellipse cx="7" cy="17" rx="6.500" ry="4" transform="rotate(15 7 17)" fill="#889" stroke="#c33" /><ellipse cx="13.500" cy="8" rx="12" ry="6.500" transform="rotate(-20 13.500 8)" fill="#fff" stroke="#d33" strokeWidth="2" /><path d="M11 4l5 12M5 11l16-5M9 17l12-12" stroke="#888" /><ellipse cx="17" cy="23" rx="2.500" ry="4.500" transform="rotate(8 17 23)" stroke="#1e7fc8" strokeWidth="2" /><ellipse cx="23" cy="19" rx="5" ry="2.500" transform="rotate(35 23 19)" stroke="#1e7fc8" strokeWidth="2" /></> },
  { name: "Spotify", line: "mx-[5px] bg-[#f5a5fb]", el: <><circle cx="14" cy="14" r="13.500" fill="#1ed760" /><path d="M6 9.500c6-1.600 12-1 17 1.700M7 14.300c5-1.400 9.500-.8 14 1.500M8 18.700c4-1.100 8-.6 11.500 1.300" stroke="#190a22" strokeWidth="2.300" strokeLinecap="round" /></> },
  { name: "Chrome", line: "mx-[5px] bg-[#f5a5fb]", el: <><circle cx="14" cy="14" r="13.500" fill="#ffcd46" /><path d="M14 14L2.300 7.300A13.500 13.500 0 0 1 25.700 8H14z" fill="#dd5144" /><path d="M2.300 7.300A13.500 13.500 0 0 0 13.500 27.500L19.500 17H14L8.500 17z" fill="#1da462" /><circle cx="14" cy="14" r="6.300" fill="#fff" /><circle cx="14" cy="14" r="5.200" fill="#4c8bf5" /></> },
  { name: "Opera GX", el: <><circle cx="13.500" cy="14" r="14" stroke="#e5174f" strokeWidth="1.400" /><ellipse cx="13.500" cy="14" rx="7" ry="12" stroke="#e5174f" strokeWidth="1.500" /><path d="M17 5c5 4 5 14 0 18" stroke="#e5174f" strokeWidth="1.300" /></> },
  { name: "Discord", line: "mx-[5px] bg-[#f5a5fb]", el: <><rect x="1" y="2" width="23" height="22" rx="3" fill="#7289da" /><path d="M4 17c0-4 1-7 2-8 2-1 9-1 11 0 1 1 2 4 2 8-1 1-3 1.500-3 1.500l-1-1.500H8l-1 1.500S5 18 4 17z" fill="#fff" /><circle cx="9" cy="13.500" r="1.500" fill="#7289da" /><circle cx="14" cy="13.500" r="1.500" fill="#7289da" /><circle cx="20" cy="20.500" r="8" fill="#e85555" /><circle cx="20" cy="20.500" r="3" fill="#fff" /></> },
  { name: "Telegram", cell: "bg-[#a33f28]", line: "bg-[#ff7a10]", el: <><circle cx="14" cy="13.500" r="13.500" fill="#2ba0dc" /><path d="M4 14L21 7l-3 15-5-4-3 3-1-5z" fill="#fff" /><path d="M10 16l9-7-6 8-2 4z" fill="#b9d6e8" /><rect x="11" y="17" width="17" height="11" rx="2" fill="#f03b3b" /><text x="12" y="26.500" fontSize="10" fill="#fff" fontFamily="Open Sans, sans-serif">..09</text></> },
  { name: "Eagle", line: "mx-[5px] border-r-[11px] border-[#c489cc] bg-[#f5a5fb]", el: <><path d="M4 0h19v8c-1-3-3-4-5-4h-4v7c2 0 4 0 5-2v9c-1-2-3-2-5-2v8h4c3 0 4-2 5-4v8H4l3-5V5z" fill="#d98324" /><path d="M7 5c4 2 4 5 0 8M7 25c5-4 5-8 0-11" stroke="#8b4a12" strokeWidth="2" /><path d="M14 4v7M14 16v8" stroke="#8b4a12" /></> },
  { name: "Word", line: "mx-[5px] bg-[#f5a5fb]", el: <><path d="M6 1h22v7H6z" fill="#41a5ee" /><path d="M6 8h22v6H6z" fill="#2b7cd3" /><path d="M6 14h22v6H6z" fill="#185abd" /><path d="M6 20h22v7H6z" fill="#103f91" /><rect x="-1" y="7" width="15" height="14" rx="1" fill="#185abd" /><text x="1" y="18" fontSize="11" fontWeight="700" fill="#fff" fontFamily="Open Sans, sans-serif">W</text></> },
  { name: "Inkscape", cell: "bg-[#4c1254]", line: "bg-[#f5a5fb]", el: <InkLogo s={28} /> },
];

function Taskbar() {
  return (
    <div className="flex h-[50px] shrink-0 bg-linear-to-r from-[#210d35] via-[#2a1032] to-[#3b153f] text-white">
      <button aria-label="Start" className="flex w-[60px] items-center justify-center">
        <Svg s={20} vb={20}><path d="M0 2.800L8.500 1.600V9.500H0zM9.500 1.500L20 0v9.500H9.500zM0 10.500h8.500v8L0 17.200zM9.500 10.500H20V20L9.500 18.500z" fill="#fff" /></Svg>
      </button>
      <label className="flex w-[429px] items-center border border-[#6f5b70] bg-[#4b374b] pl-[14px]">
        <Svg s={21} vb={21}><circle cx="13" cy="8" r="6.500" stroke="#eee" strokeWidth="1.500" /><path d="M8.500 12.500L1 20" stroke="#eee" strokeWidth="1.500" /></Svg>
        <input aria-label="Search" placeholder="Type here to search" className="flex-1 bg-transparent pl-[14px] text-[17px] outline-none placeholder:text-[#d6ced6]" />
      </label>
      <div className="flex">
        {APPS.map((a) => (
          <button key={a.name} aria-label={a.name} className={"flex w-[62px] flex-col " + (a.cell ?? "")}>
            <span className="flex flex-1 items-center justify-center pt-[3px]"><Svg s={a.s ?? 28} vb={28}>{a.el}</Svg></span>
            <span className={"block h-[3px] self-stretch " + (a.line ?? "")} />
          </button>
        ))}
      </div>
      <div className="ml-auto flex items-center">
        <div className="flex items-center gap-[9px] pr-[17px]">
          <button aria-label="Show hidden icons"><Svg s={16}><path d="M0 12l8-8 8 8" stroke="#fff" strokeWidth="1.500" /></Svg></button>
          <Svg s={21} vb={20}><path d="M4 16a4 4 0 0 1-.5-8A6 6 0 0 1 14 6a5 5 0 0 1 2.500 10z" fill="#0f6cbd" /><path d="M4 16a3 3 0 0 1 0-6l6-1 8 2a3 3 0 0 1-1 5z" fill="#28a8ea" /></Svg>
          <Svg s={21} vb={20}><path d="M4 16a4 4 0 0 1-.5-8A6 6 0 0 1 14 6a5 5 0 0 1 2.500 10z" fill="#bbaebf" /><path d="M4 16a3 3 0 0 1 2-5l6-2 6 3a2.500 2.500 0 0 1-1 4z" fill="#fff" /></Svg>
          <Svg s={21} vb={20}><path d="M5.500 6.500h12v9h-12z" stroke="#fff" strokeWidth="1.500" /><path d="M7 8h9v6H7zM18 9.500h2v3h-2z" fill="#fff" /><path d="M1 2v4h3V2M1 5h3M2.500 6v7" stroke="#fff" strokeWidth="1.200" /></Svg>
          <Svg s={20} vb={20}><path d="M2 17A15 15 0 0 1 17 3M6 17A11 11 0 0 1 17 7M9.500 17a8 8 0 0 1 7.500-6" stroke="#ddd" strokeWidth="1.300" /><circle cx="15" cy="16" r="2" fill="#fff" /></Svg>
          <Svg s={21} vb={20}><path d="M1 7h3l4-4v14l-4-4H1z" stroke="#fff" strokeWidth="1.200" /><path d="M11 8c1 1 1 3 0 4M14 5.500c2.500 2.500 2.500 6.500 0 9M17 3c4 4 4 10 0 14" stroke="#fff" strokeWidth="1.200" /></Svg>
        </div>
        <div className="flex flex-col items-center text-[14px] leading-[23px]"><span>10:44 AM</span><span>04-Nov-20</span></div>
        <button aria-label="Notifications" className="ml-[20px]">
          <Svg s={32} vb={32}><path d="M2 3h20v17H12l-5 5v-5H2z" fill="#fff" /><path d="M6 8h12M6 12h12M6 16h8" stroke="#3b153f" strokeWidth="1.300" /><circle cx="21" cy="22" r="9.500" fill="#4c1254" stroke="#b7a" /><text x="17" y="27" fontSize="14" fontWeight="700" fill="#fff" fontFamily="Open Sans, sans-serif">2</text></Svg>
        </button>
        <span className="mr-[5px] ml-[14px] h-[50px] w-px bg-[#7a5f7d]" />
      </div>
    </div>
  );
}

export default function App() {
  return (
    <div className="relative flex h-screen flex-col overflow-hidden bg-white font-['Open_Sans','Noto_Sans',sans-serif]">
      <TopBars />
      <main className="flex min-h-0 flex-1 overflow-hidden">
        <ToolBox />
        <CanvasArea />
        <RightDock />
      </main>
      <Palette />
      <StatusBar />
      <Taskbar />
      <Dialog />
    </div>
  );
}
